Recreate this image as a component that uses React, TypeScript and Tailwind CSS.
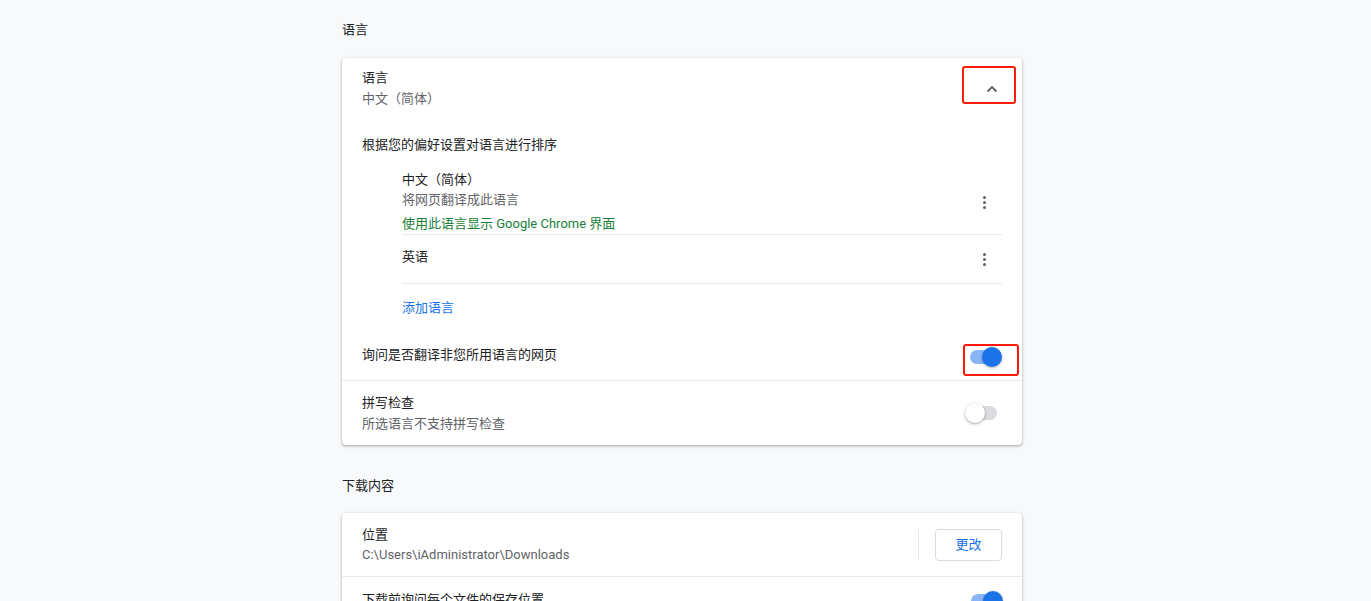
import { ReactNode } from "react";

const font = { fontFamily: '"Roboto", "Noto Sans CJK SC", sans-serif' };

const Toggle = ({ on }: { on: boolean }) => (
  <div className="relative h-[14px] w-[32px]">
    <div className={`absolute left-[2px] top-0 h-[14px] w-[28px] rounded-full ${on ? "bg-[#8ab4f8]" : "bg-[#dadce0]"}`} />
    <div
      className={`absolute top-[-3px] h-[20px] w-[20px] rounded-full ${
        on ? "left-[14px] bg-[#1a73e8] shadow-[0_1px_3px_rgba(0,0,0,0.3)]" : "left-[-2px] bg-white shadow-[0_1px_3px_rgba(0,0,0,0.35)]"
      }`}
    />
  </div>
);

const Kebab = () => (
  <div className="flex h-[36px] w-[36px] flex-col items-center justify-center gap-[2px]">
    <span className="h-[3px] w-[3px] rounded-full bg-[#5f6368]" />
    <span className="h-[3px] w-[3px] rounded-full bg-[#5f6368]" />
    <span className="h-[3px] w-[3px] rounded-full bg-[#5f6368]" />
  </div>
);

const Card = ({ children }: { children: ReactNode }) => (
  <div className="rounded-[4px] bg-white shadow-[0_1px_2px_rgba(60,64,67,0.3),0_1px_3px_1px_rgba(60,64,67,0.15)]">
    {children}
  </div>
);

// red annotation frame from the screenshot
const Highlight = ({ children, className }: { children: ReactNode; className: string }) => (
  <div className={`flex rounded-[3px] border-2 border-[#ff1a0a] ${className}`}>{children}</div>
);

export default function App() {
  return (
    <div className="min-h-[601px] w-full bg-[#f8f9fa] text-[13px] text-[#202124]" style={font}>
      <div className="ml-[342px] w-[680px] pt-[20px]">
        <h2 className="h-[20px] leading-[20px] text-[13px] font-normal">语言</h2>
        <div className="mt-[18px]">
          <Card>
            {/* header row */}
            <div className="flex h-[65px] items-start px-[20px] pt-[10px]">
              <div className="flex-1">
                <div className="leading-[20px]">语言</div>
                <div className="mt-[1px] leading-[20px] text-[#5f6368]">中文（简体）</div>
              </div>
              <Highlight className="mr-[-14px] mt-[-2px] h-[38px] w-[54px] items-center justify-center">
                <svg width="12" height="8" viewBox="0 0 12 8" className="ml-[6px] mt-[8px]">
                  <path d="M1.5 6.5 L6 2 L10.5 6.5" fill="none" stroke="#5f6368" strokeWidth="1.8" />
                </svg>
              </Highlight>
            </div>

            <div className="flex h-[42px] items-center px-[20px] pt-[2px]">根据您的偏好设置对语言进行排序</div>

            <div className="pl-[60px] pr-[20px]">
              <div className="flex border-b border-[#e8eaed] pt-[5px]">
                <div className="flex-1">
                  <div className="leading-[20px]">中文（简体）</div>
                  <div className="leading-[20px] text-[#5f6368]">将网页翻译成此语言</div>
                  <div className="mt-[4px] leading-[20px] text-[#188038]">使用此语言显示 Google Chrome 界面</div>
                </div>
                <div className="flex items-center">
                  <Kebab />
                </div>
              </div>
              <div className="flex h-[49px] items-center border-b border-[#e8eaed]">
                <div className="mt-[-4px] flex-1">英语</div>
                <Kebab />
              </div>
              <div className="flex h-[47px] items-center">
                <span className="text-[#1a73e8]">添加语言</span>
              </div>
            </div>

            <div className="flex h-[50px] items-start border-b border-[#e8eaed] pl-[20px] pr-[3px]">
              <div className="mt-[14px] flex-1 leading-[20px]">询问是否翻译非您所用语言的网页</div>
              <Highlight className="mt-[13px] h-[32px] w-[56px] items-start pl-[3px] pt-[4px]">
                <Toggle on />
              </Highlight>
            </div>

            <div className="flex h-[64px] items-center px-[20px]">
              <div className="flex-1">
                <div className="leading-[20px]">拼写检查</div>
                <div className="mt-[1px] leading-[20px] text-[#5f6368]">所选语言不支持拼写检查</div>
              </div>
              <div className="mr-[3px]">
                <Toggle on={false} />
              </div>
            </div>
          </Card>
        </div>

        <h2 className="mt-[31px] h-[20px] leading-[20px] text-[13px] font-normal">下载内容</h2>
        <div className="mt-[17px]">
          <Card>
            <div className="flex h-[64px] items-center border-b border-[#e8eaed] px-[20px]">
              <div className="flex-1">
                <div className="leading-[20px]">位置</div>
                <div className="leading-[20px] text-[#5f6368]">C:\Users\iAdministrator\Downloads</div>
              </div>
              <div className="mr-[16px] h-[32px] w-px bg-[#e8eaed]" />
              <button className="h-[32px] w-[67px] rounded-[4px] border border-[#dadce0] bg-white text-[13px] text-[#1a73e8]">
                更改
              </button>
            </div>
            <div className="flex h-[48px] items-start px-[20px]">
              <div className="mt-[13px] flex-1 leading-[20px]">下载前询问每个文件的保存位置</div>
              <div className="mt-[17px] mr-[1px]">
                <Toggle on />
              </div>
            </div>
          </Card>
        </div>
      </div>
    </div>
  );
}
